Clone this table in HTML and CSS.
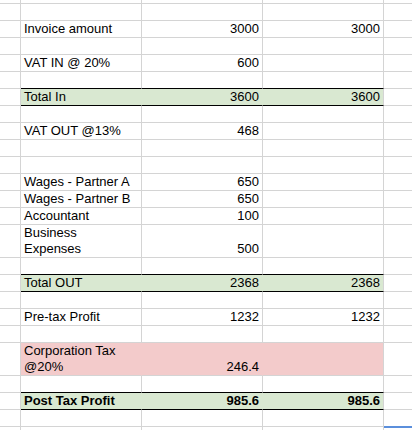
FILE: index.html
```html
<!DOCTYPE html>
<html lang="en">
<head>
<meta charset="utf-8">
<title>Profit sheet</title>
<link rel="stylesheet" href="styles.css">
</head>
<body>
<div class="sheet">
  <div class="row stub"><div class="c"></div><div class="c"></div><div class="c"></div><div class="c"></div><div class="c"></div></div>
  <div class="row"><div class="c"></div><div class="c"></div><div class="c"></div><div class="c"></div><div class="c"></div></div>
  <div class="row"><div class="c"></div><div class="c">Invoice amount</div><div class="c n">3000</div><div class="c n">3000</div><div class="c"></div></div>
  <div class="row"><div class="c"></div><div class="c"></div><div class="c"></div><div class="c"></div><div class="c"></div></div>
  <div class="row"><div class="c"></div><div class="c">VAT IN @ 20%</div><div class="c n">600</div><div class="c"></div><div class="c"></div></div>
  <div class="row above"><div class="c"></div><div class="c"></div><div class="c"></div><div class="c"></div><div class="c"></div></div>
  <div class="row total"><div class="c"></div><div class="c">Total In</div><div class="c n">3600</div><div class="c n">3600</div><div class="c"></div></div>
  <div class="row"><div class="c"></div><div class="c"></div><div class="c"></div><div class="c"></div><div class="c"></div></div>
  <div class="row"><div class="c"></div><div class="c">VAT OUT @13%</div><div class="c n">468</div><div class="c"></div><div class="c"></div></div>
  <div class="row"><div class="c"></div><div class="c"></div><div class="c"></div><div class="c"></div><div class="c"></div></div>
  <div class="row"><div class="c"></div><div class="c"></div><div class="c"></div><div class="c"></div><div class="c"></div></div>
  <div class="row"><div class="c"></div><div class="c">Wages - Partner A</div><div class="c n">650</div><div class="c"></div><div class="c"></div></div>
  <div class="row"><div class="c"></div><div class="c">Wages - Partner B</div><div class="c n">650</div><div class="c"></div><div class="c"></div></div>
  <div class="row"><div class="c"></div><div class="c">Accountant</div><div class="c n">100</div><div class="c"></div><div class="c"></div></div>
  <div class="row tall"><div class="c"></div><div class="c">Business<br>Expenses</div><div class="c n">500</div><div class="c"></div><div class="c"></div></div>
  <div class="row above"><div class="c"></div><div class="c"></div><div class="c"></div><div class="c"></div><div class="c"></div></div>
  <div class="row total"><div class="c"></div><div class="c">Total OUT</div><div class="c n">2368</div><div class="c n">2368</div><div class="c"></div></div>
  <div class="row"><div class="c"></div><div class="c"></div><div class="c"></div><div class="c"></div><div class="c"></div></div>
  <div class="row"><div class="c"></div><div class="c">Pre-tax Profit</div><div class="c n">1232</div><div class="c n">1232</div><div class="c"></div></div>
  <div class="row"><div class="c"></div><div class="c"></div><div class="c"></div><div class="c"></div><div class="c"></div></div>
  <div class="row tall tax"><div class="c"></div><div class="c">Corporation Tax<br>@20%</div><div class="c n">246.4</div><div class="c"></div><div class="c"></div></div>
  <div class="row above"><div class="c"></div><div class="c"></div><div class="c"></div><div class="c"></div><div class="c"></div></div>
  <div class="row total bold"><div class="c"></div><div class="c">Post Tax Profit</div><div class="c n">985.6</div><div class="c n">985.6</div><div class="c"></div></div>
  <div class="row"><div class="c"></div><div class="c"></div><div class="c"></div><div class="c"></div><div class="c"></div></div>
  <div class="row"><div class="c"></div><div class="c"></div><div class="c"></div><div class="c"></div><div class="c selected"></div></div>
</div>
</body>
</html>
```
FILE: styles.css
```css
html, body {
  margin: 0;
  padding: 0;
  background: #ffffff;
}

body {
  font-family: "Liberation Sans", Arial, sans-serif;
  font-size: 13px;
  color: #000000;
}

.sheet {
  display: flex;
  flex-direction: column;
  width: 412px;
  height: 430px;
  overflow: hidden;
}

.row {
  display: grid;
  grid-template-columns: 21px 121px 121px 121px 1fr;
  height: 17px;
  flex: none;
}

.row.stub {
  height: 4px;
}

.row.tall {
  height: 33px;
}

.c {
  box-sizing: border-box;
  border-right: 1px solid #d4d4d4;
  border-bottom: 1px solid #d4d4d4;
  padding: 0 2px 0 3px;
  line-height: 16px;
  display: flex;
  align-items: flex-end;
  white-space: nowrap;
  overflow: hidden;
}

.c:last-child {
  border-right: none;
}

.c.n {
  justify-content: flex-end;
  padding: 0 3px 0 2px;
}

.row.above .c:nth-child(n+2):nth-child(-n+4) {
  border-bottom-color: #000000;
}

.row.total .c:nth-child(n+2):nth-child(-n+4) {
  background: #d9e8d1;
  border-bottom-color: #000000;
}

.row.total .c:nth-child(2),
.row.total .c:nth-child(3) {
  border-right-color: #d9e8d1;
}

.row.tax .c:nth-child(n+2):nth-child(-n+4) {
  background: #f3cbcb;
}

.row.tax .c:nth-child(2),
.row.tax .c:nth-child(3) {
  border-right-color: #f3cbcb;
}

.row.bold .c {
  font-weight: bold;
}

.c.selected {
  border-top: 2px solid #5b8fdc;
  margin-top: -1px;
}
```
